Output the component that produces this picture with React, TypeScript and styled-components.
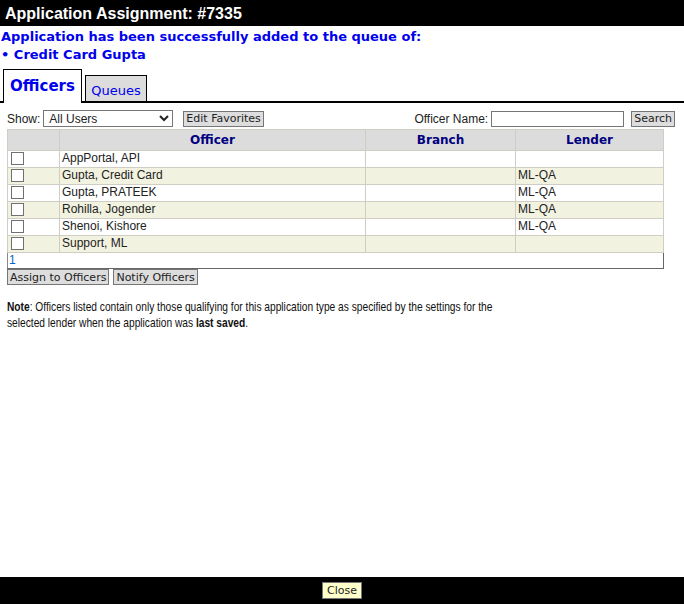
import React from 'react'
import styled, { createGlobalStyle } from 'styled-components'

const GlobalStyle = createGlobalStyle`
  html, body {
    margin: 0;
    padding: 0;
    height: 100%;
    background: #fff;
  }
  #root {
    height: 100%;
  }
`

const officers = [
  { name: 'AppPortal, API', branch: '', lender: '' },
  { name: 'Gupta, Credit Card', branch: '', lender: 'ML-QA' },
  { name: 'Gupta, PRATEEK', branch: '', lender: 'ML-QA' },
  { name: 'Rohilla, Jogender', branch: '', lender: 'ML-QA' },
  { name: 'Shenoi, Kishore', branch: '', lender: 'ML-QA' },
  { name: 'Support, ML', branch: '', lender: '' },
]

const App = () => {
  return (
    <>
      <GlobalStyle />
      <Page>
        <TitleBar>Application Assignment: #7335</TitleBar>
        <Main>
          <Message>
            <div>Application has been successfully added to the queue of:</div>
            <div>• Credit Card Gupta</div>
          </Message>

          <Tabs>
            <Tab active>Officers</Tab>
            <Tab>Queues</Tab>
          </Tabs>

          <Toolbar>
            <Label>Show:</Label>
            <Select defaultValue="all">
              <option value="all">All Users</option>
            </Select>
            <SmallButton>Edit Favorites</SmallButton>
            <Spacer />
            <Label>Officer Name:</Label>
            <TextInput type="text" />
            <SmallButton>Search</SmallButton>
          </Toolbar>

          <Grid>
            <colgroup>
              <col style={{ width: 52 }} />
              <col style={{ width: 306 }} />
              <col style={{ width: 150 }} />
              <col style={{ width: 148 }} />
            </colgroup>
            <thead>
              <tr>
                <HeadCell />
                <HeadCell>Officer</HeadCell>
                <HeadCell>Branch</HeadCell>
                <HeadCell>Lender</HeadCell>
              </tr>
            </thead>
            <tbody>
              {officers.map((o, i) => (
                <Row key={o.name} alt={i % 2 === 1}>
                  <Cell>
                    <Check type="checkbox" />
                  </Cell>
                  <Cell>{o.name}</Cell>
                  <Cell>{o.branch}</Cell>
                  <Cell>{o.lender}</Cell>
                </Row>
              ))}
              <tr>
                <PagerCell colSpan={4}>1</PagerCell>
              </tr>
            </tbody>
          </Grid>

          <ButtonRow>
            <SmallButton>Assign to Officers</SmallButton>
            <SmallButton>Notify Officers</SmallButton>
          </ButtonRow>

          <NoteWrap>
            <Note>
              <b>Note</b>: Officers listed contain only those qualifying for this application type
              as specified by the settings for the selected lender when the application was{' '}
              <b>last saved</b>.
            </Note>
          </NoteWrap>
        </Main>
        <Footer>
          <CloseButton>Close</CloseButton>
        </Footer>
      </Page>
    </>
  )
}

export default App

const Page = styled.div`
  display: flex;
  flex-direction: column;
  height: 100%;
  font-family: 'Liberation Sans', Arial, sans-serif;
  font-size: 12px;
  color: #222;
`

const TitleBar = styled.div`
  background: #000;
  color: #fff;
  font-weight: bold;
  font-size: 16px;
  height: 26px;
  line-height: 27px;
  padding-left: 5px;
`

const Main = styled.div`
  flex: 1;
`

const Message = styled.div`
  color: #0000ee;
  font-family: 'DejaVu Sans', Verdana, sans-serif;
  font-weight: bold;
  font-size: 13px;
  line-height: 18px;
  padding: 2px 0 0 1px;
`

const Tabs = styled.div`
  display: flex;
  align-items: flex-end;
  gap: 3px;
  padding-left: 3px;
  margin-top: 5px;
  border-bottom: 2px solid #000;
  height: 32px;
`

const Tab = styled.div<{ active?: boolean }>`
  font-family: 'DejaVu Sans', Verdana, sans-serif;
  color: #0000ee;
  border: 1px solid #000;
  border-bottom: none;
  box-sizing: border-box;
  margin-bottom: ${(p) => (p.active ? '-2px' : '0')};
  background: ${(p) => (p.active ? '#fff' : '#dcdcdc')};
  font-weight: ${(p) => (p.active ? 'bold' : 'normal')};
  font-size: ${(p) => (p.active ? '15px' : '13px')};
  height: ${(p) => (p.active ? '34px' : '26px')};
  width: ${(p) => (p.active ? '79px' : '62px')};
  text-align: center;
  line-height: ${(p) => (p.active ? '33px' : '29px')};
`

const Toolbar = styled.div`
  display: flex;
  align-items: center;
  padding: 6px 9px 0 7px;
  height: 19px;
`

const Label = styled.span`
  font-size: 12px;
  margin-right: 3px;
  color: #222;
`

const Select = styled.select`
  width: 130px;
  height: 17px;
  font-family: 'Liberation Sans', Arial, sans-serif;
  font-size: 12px;
  border: 1px solid #767676;
  border-radius: 0;
  padding: 0 0 0 1px;
  margin-right: 10px;
  background: #fff;
  color: #222;
`

const SmallButton = styled.button`
  font-family: 'DejaVu Sans', Verdana, sans-serif;
  font-size: 11px;
  height: 16px;
  padding: 0 2px;
  border: 1px solid #767676;
  background: #dddddd;
  color: #222;
  border-radius: 0;
  line-height: 13px;
  cursor: pointer;
`

const Spacer = styled.div`
  flex: 1;
`

const TextInput = styled.input`
  width: 133px;
  height: 16px;
  box-sizing: border-box;
  border: 1px solid #767676;
  padding: 0 2px;
  margin-right: 7px;
`

const Grid = styled.table`
  margin: 1px 0 0 7px;
  width: 656px;
  border-collapse: collapse;
  table-layout: fixed;
`

const HeadCell = styled.th`
  background: #dcdcdc;
  color: #000080;
  font-family: 'DejaVu Sans', Verdana, sans-serif;
  font-size: 12px;
  font-weight: bold;
  height: 20px;
  padding: 0;
  border: 1px solid #d0cec4;
`

const Row = styled.tr<{ alt?: boolean }>`
  background: ${(p) => (p.alt ? '#f2f2e0' : '#fff')};
`

const Cell = styled.td`
  border: 1px solid #d0cec4;
  height: 16px;
  padding: 0 0 0 2px;
  font-size: 12px;
  line-height: 15px;
  color: #222;
  white-space: nowrap;
  vertical-align: top;
`

const Check = styled.input`
  appearance: none;
  display: block;
  width: 13px;
  height: 13px;
  margin: 1px 0 0 1px;
  border: 1px solid #707070;
  background: #fff;
  box-sizing: border-box;
`

const PagerCell = styled.td`
  height: 15px;
  padding: 0 0 0 1px;
  font-size: 12px;
  line-height: 15px;
  color: #0066cc;
  border-left: 1px solid #888;
  border-right: 1px solid #666;
  border-bottom: 1px solid #666;
  background: #fff;
`

const ButtonRow = styled.div`
  display: flex;
  gap: 4px;
  padding: 0 0 0 7px;
`

const NoteWrap = styled.div`
  margin: 14px 0 0 7px;
  height: 34px;
`

// the original note is set in a condensed face; scale Arial down horizontally
const Note = styled.p`
  margin: 0;
  width: 640px;
  font-size: 13px;
  line-height: 16px;
  color: #111;
  transform: scaleX(0.785);
  transform-origin: left top;
`

const Footer = styled.div`
  background: #000;
  height: 27px;
  display: flex;
  justify-content: center;
  align-items: center;
`

const CloseButton = styled.button`
  font-family: 'DejaVu Sans', Verdana, sans-serif;
  font-size: 11px;
  height: 17px;
  padding: 0 4px;
  background: #ffffcc;
  border: 1px solid #777;
  color: #222;
  border-radius: 0;
`
